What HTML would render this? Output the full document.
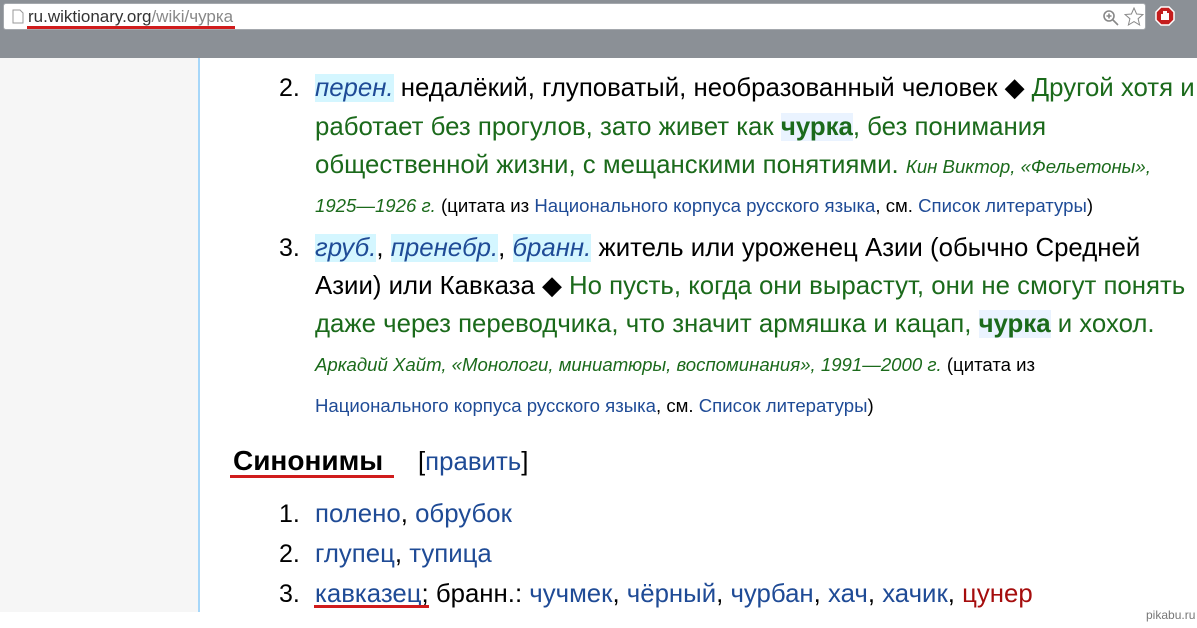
<!DOCTYPE html>
<html><head><meta charset="utf-8"><style>
*{margin:0;padding:0;box-sizing:border-box}
body{width:1197px;height:628px;overflow:hidden;background:#fff;font-family:"Liberation Sans",Arial,sans-serif;position:relative}
#top{position:absolute;left:0;top:0;width:1197px;height:58px;background:#8b9096}
#addr{position:absolute;left:3px;top:3px;width:1143px;height:27px;background:#fff;border:1px solid #a4a8ad;border-radius:3px}
#side{position:absolute;left:0;top:58px;width:200px;height:554px;background:#f6f6f6;border-right:2px solid #a7d7f9}
.l{position:absolute;white-space:nowrap;font-size:25.8px;line-height:30px;color:#000}
.s{font-size:18.6px}
.g{color:#1b6a1b}
.b{color:#1f4b96}
.a{background:#d4f6ff;color:#1f4b96;font-style:italic}
.h{background:#eaf3ff;font-weight:bold;color:#1b6a1b}
.i{font-style:italic}
.r{color:#a50d0d}
.n{position:absolute;font-size:25px;line-height:30px;left:279px}
</style></head><body>
<div id="top"><div id="addr">
<svg style="position:absolute;left:8px;top:5px" width="12" height="15"><path d="M1 1h7l3 3v10H1z" fill="#fff" stroke="#999"/></svg>
<div style="position:absolute;left:24px;top:3px;font-size:17px;color:#333">ru.wiktionary.org<span style="color:#888">/wiki/чурка</span></div>
<div style="position:absolute;left:23px;top:22px;width:208px;height:3px;background:#d01c1c"></div>
<svg style="position:absolute;left:1098px;top:5px" width="18" height="18"><circle cx="7" cy="7" r="5" fill="none" stroke="#888" stroke-width="1.6"/><path d="M11 11l5 5M4.5 7h5M7 4.5v5" stroke="#888" stroke-width="1.6"/></svg>
<svg style="position:absolute;left:1120px;top:3px" width="20" height="20"><path d="M10 1l2.6 6 6.4.5-4.9 4.2 1.5 6.3L10 14.6 4.4 18l1.5-6.3L1 7.5 7.4 7z" fill="#fff" stroke="#888"/></svg>
</div>
<svg style="position:absolute;left:1155px;top:6px" width="20" height="20"><polygon points="6,1 14,1 19,6 19,14 14,19 6,19 1,14 1,6" fill="#c41d1d" stroke="#fff" stroke-width="1.5"/><path d="M7 14V8M9 14V5M11 14V5M13 14V7" stroke="#fff" stroke-width="2"/></svg>
</div>
<div id="side"></div>

<div class="n" style="top:73px">2.</div>
<div class="l" style="left:315px;top:73px"><span class="a">перен.</span> недалёкий, глуповатый, необразованный человек ◆ <span class="g">Другой хотя и</span></div>
<div class="l g" style="left:315px;top:112px">работает без прогулов, зато живет как <span class="h">чурка</span>, без понимания</div>
<div class="l g" style="left:315px;top:150px">общественной жизни, с мещанскими понятиями. <span class="i s">Кин Виктор, «Фельетоны»,</span></div>
<div class="l s" style="left:315px;top:191px"><span class="g i">1925—1926 г.</span> (цитата из <span class="b">Национального корпуса русского языка</span>, см. <span class="b">Список литературы</span>)</div>

<div class="n" style="top:233px">3.</div>
<div class="l" style="left:315px;top:233px"><span class="a">груб.</span>, <span class="a">пренебр.</span>, <span class="a">бранн.</span> житель или уроженец Азии (обычно Средней</div>
<div class="l" style="left:315px;top:271px">Азии) или Кавказа ◆ <span class="g">Но пусть, когда они вырастут, они не смогут понять</span></div>
<div class="l g" style="left:315px;top:309px">даже через переводчика, что значит армяшка и кацап, <span class="h">чурка</span> и хохол.</div>
<div class="l s" style="left:315px;top:350px"><span class="g i">Аркадий Хайт, «Монологи, миниатюры, воспоминания», 1991—2000 г.</span> (цитата из</div>
<div class="l s" style="left:315px;top:391px"><span class="b">Национального корпуса русского языка</span>, см. <span class="b">Список литературы</span>)</div>

<div class="l" style="left:233px;top:446px;font-weight:bold;font-size:28px">Синонимы</div>
<div style="position:absolute;left:230px;top:475px;width:164px;height:3px;background:#d01c1c"></div>
<div class="l" style="left:418px;top:447px">[<span class="b">править</span>]</div>

<div class="n" style="top:499px">1.</div>
<div class="l b" style="left:315px;top:499px">полено<span style="color:#000">,</span> обрубок</div>
<div class="n" style="top:539px">2.</div>
<div class="l b" style="left:315px;top:539px">глупец<span style="color:#000">,</span> тупица</div>
<div class="n" style="top:579px">3.</div>
<div class="l" style="left:315px;top:579px"><span class="b">кавказец</span>; бранн.: <span class="b">чучмек</span>, <span class="b">чёрный</span>, <span class="b">чурбан</span>, <span class="b">хач</span>, <span class="b">хачик</span>, <span class="r">цунер</span></div>
<div style="position:absolute;left:314px;top:605px;width:115px;height:3px;background:#d01c1c"></div>
<div style="position:absolute;left:1146px;top:608px;font-size:12px;color:#777">pikabu.ru</div>
</body></html>
